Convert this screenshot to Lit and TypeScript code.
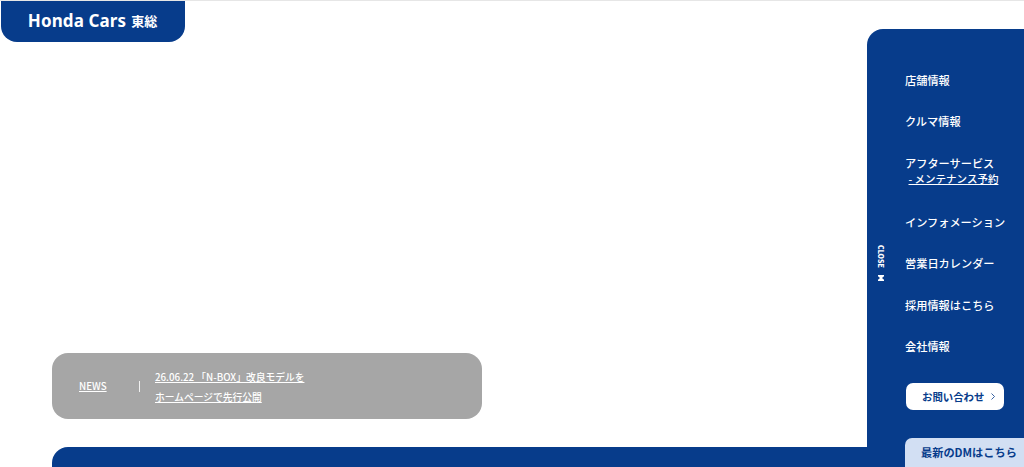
import { LitElement, html, css } from "lit";
import { customElement } from "lit/decorators.js";

const NAV: { label: string; sub?: string }[] = [
  { label: "店舗情報" },
  { label: "クルマ情報" },
  { label: "アフターサービス", sub: "- メンテナンス予約" },
  { label: "インフォメーション" },
  { label: "営業日カレンダー" },
  { label: "採用情報はこちら" },
  { label: "会社情報" },
];

@customElement("app-root")
export class AppRoot extends LitElement {
  static styles = css`
    :host {
      display: flex;
      width: 1024px;
      height: 467px;
      overflow: hidden;
      background: #fff;
      font-family: "Noto Sans CJK JP", "Noto Sans", sans-serif;
      border-top: 1px solid #e6e6e6;
      box-sizing: border-box;
    }
    .main {
      flex: 1;
      min-width: 0;
      display: flex;
      flex-direction: column;
    }
    .logo {
      height: 41px;
      box-sizing: border-box;
      margin-left: 1px;
      width: 184px;
      background: #073c8b;
      border-radius: 0 0 16px 16px;
      color: #fff;
      display: flex;
      align-items: center;
      justify-content: center;
      gap: 5px;
      font-weight: 700;
      padding: 0 1px 2px 0;
    }
    .logo .en { font-family: "Noto Sans", sans-serif; font-size: 17px; font-weight: 700; letter-spacing: 0.1px; }
    .logo .ja { font-size: 13px; }
    .news {
      margin: auto 0 0 52px;
      width: 430px;
      height: 66px;
      box-sizing: border-box;
      background: #a6a6a6;
      border-radius: 16px;
      color: #fff;
      display: flex;
      align-items: center;
      font-size: 9.75px;
      font-weight: 500;
      padding-left: 27px;
    }
    .news a { color: inherit; text-decoration: underline; }
    .tag { width: 60px; margin-top: -1px; }
    .sep { width: 1px; height: 11px; background: #f0f0f0; margin-right: 15px; }
    .lines { display: flex; flex-direction: column; line-height: 20px; padding-top: 2px; }
    .band {
      margin: 28px 0 0 52px;
      height: 20px;
      background: #073c8b;
      border-radius: 16px 0 0 0;
      flex: none;
    }
    .side {
      flex: none;
      width: 157px;
      margin-top: 28px;
      background: #073c8b;
      border-radius: 16px 0 0 0;
      color: #fff;
      display: flex;
    }
    .close {
      width: 38px;
      flex: none;
      display: flex;
      flex-direction: column;
      align-items: center;
      justify-content: center;
      gap: 7px;
      padding: 30px 10px 0 0;
      box-sizing: border-box;
    }
    .close span { writing-mode: vertical-rl; font-size: 7px; font-weight: 900; line-height: 8px; }
    .close svg { display: block; }
    .nav { flex: 1; display: flex; flex-direction: column; padding-top: 40.6px; min-width: 0; }
    .item { flex: none; font-size: 11.2px; font-weight: 500; line-height: 20px; margin-bottom: 21.6px; white-space: nowrap; }
    .item .sub { display: block; text-decoration: underline; padding-left: 3.5px; font-size: 10.5px; line-height: 16px; margin-top: -1.5px; margin-bottom: 2.7px; }
    .btn {
      flex: none;
      width: 98px;
      height: 27px;
      box-sizing: border-box;
      margin: 5.4px 0 0 1px;
      padding-left: 16px;
      background: #fff;
      color: #073c8b;
      border-radius: 7px;
      display: flex;
      align-items: center;
      gap: 7px;
      font-size: 10.4px;
      font-weight: 700;
    }
    .dm {
      flex: none;
      width: 140px;
      height: 36px;
      box-sizing: border-box;
      margin-top: 28px;
      background: #d2dff3;
      color: #073c8b;
      border-radius: 7px;
      display: flex;
      padding: 6px 0 0 16px;
      font-size: 11.2px;
      font-weight: 700;
      white-space: nowrap;
    }
  `;

  render() {
    return html`
      <div class="main">
        <div class="logo"><span class="en">Honda Cars</span><span class="ja">東総</span></div>
        <div class="news">
          <a class="tag" href="#">NEWS</a>
          <span class="sep"></span>
          <div class="lines">
            <a href="#">26.06.22 「N-BOX」改良モデルを</a>
            <a href="#">ホームページで先行公開</a>
          </div>
        </div>
        <div class="band"></div>
      </div>
      <aside class="side">
        <div class="close">
          <span>CLOSE</span>
          <svg width="6" height="6" viewBox="0 0 6 6"><path d="M0 0h6v1.2L4 3l2 1.8V6H0V4.8L2 3 0 1.2z" fill="#fff" /></svg>
        </div>
        <nav class="nav">
          ${NAV.map(
            (n) => html`<div class="item">${n.label}${n.sub ? html`<span class="sub">${n.sub}</span>` : ""}</div>`
          )}
          <div class="btn">
            <span>お問い合わせ</span>
            <svg width="4" height="7" viewBox="0 0 4 7"><path d="M.5.5 3.5 3.5.5 6.5" fill="none" stroke="#073c8b" stroke-width=".8" /></svg>
          </div>
          <div class="dm">最新のDMはこちら</div>
        </nav>
      </aside>
    `;
  }
}
